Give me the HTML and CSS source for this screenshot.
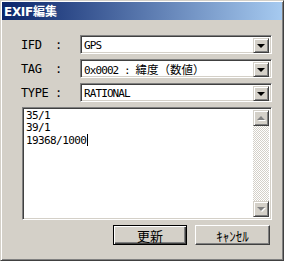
FILE: index.html
```html
<!DOCTYPE html>
<html>
<head>
  <link rel="stylesheet" href="styles.css">
</head>
<body>
  <div class="window">
    <div class="title-bar">EXIF<span class="jp">編集</span></div>

    <div class="dialog-body">
      <div class="field-row">
        <div class="field-label"><span class="field-name">IFD</span><span>:</span></div>
        <div class="combo">
          <span class="combo-text">GPS</span>
          <span class="combo-button"><span class="arrow-down"></span></span>
        </div>
      </div>

      <div class="field-row">
        <div class="field-label"><span class="field-name">TAG</span><span>:</span></div>
        <div class="combo">
          <span class="combo-text">0x0002 : <span class="jp">緯度（数値）</span></span>
          <span class="combo-button"><span class="arrow-down"></span></span>
        </div>
      </div>

      <div class="field-row">
        <div class="field-label"><span class="field-name">TYPE</span><span>:</span></div>
        <div class="combo">
          <span class="combo-text">RATIONAL</span>
          <span class="combo-button"><span class="arrow-down"></span></span>
        </div>
      </div>

      <div class="value-box">
        <div class="value-text">
          <div>35/1</div>
          <div>39/1</div>
          <div>19368/1000<span class="caret"></span></div>
        </div>
        <div class="scrollbar">
          <span class="scroll-button"><span class="arrow-up-gray"></span></span>
          <span class="scroll-track"></span>
          <span class="scroll-button"><span class="arrow-down-gray"></span></span>
        </div>
      </div>

      <div class="button-row">
        <button class="push-button default-button">更新</button>
        <button class="push-button">ｷｬﾝｾﾙ</button>
      </div>
    </div>
  </div>
</body>
</html>
```

FILE: styles.css
```css
/* dialog estilo Windows clásico */
body {
  margin: 0;
  background: #fff;
  font-family: "DejaVu Sans Mono", "Noto Sans CJK JP", monospace;
  font-size: 11px;
  color: #000;
}

.window {
  width: 284px;
  height: 261px;
  box-sizing: border-box;
  background: #d4d0c8;
  border: 1px solid;
  border-color: #d4d0c8 #404040 #404040 #d4d0c8;
  box-shadow: inset 1px 1px #fff, inset -1px -1px #808080;
  padding: 1px 1px;
  display: flex;
  flex-direction: column;
}

.title-bar {
  height: 18px;
  line-height: 18px;
  padding-left: 2px;
  background: linear-gradient(to right, #0a246a, #a6caf0);
  color: #fff;
  font-family: "DejaVu Sans", "Noto Sans CJK JP", sans-serif;
  font-weight: bold;
  font-size: 12px;
  letter-spacing: -0.3px;
}

.jp {
  font-family: "Noto Sans CJK JP", sans-serif;
  letter-spacing: 0;
}

.dialog-body {
  padding: 15px 10px 0 19px;
  display: flex;
  flex-direction: column;
}

.field-row {
  display: flex;
  height: 19px;
  margin-bottom: 5px;
}

.field-label {
  width: 59px;
  flex: none;
  display: flex;
  align-items: center;
  letter-spacing: -0.4px;
  font-size: 12px;
}

.field-name {
  width: 34px;
}

.combo {
  flex: 1;
  display: flex;
  background: #fff;
  border: 1px solid;
  border-color: #808080 #fff #fff #808080;
  box-shadow: inset 1px 1px #404040, inset -1px -1px #d4d0c8;
  padding: 2px;
  box-sizing: border-box;
}

.combo-text {
  flex: 1;
  line-height: 15px;
  padding-left: 1px;
  letter-spacing: -0.9px;
  white-space: nowrap;
}

.combo-text .jp {
  font-size: 11.5px;
}

.combo-button,
.scroll-button {
  width: 16px;
  height: 15px;
  box-sizing: border-box;
  background: #d4d0c8;
  border: 1px solid;
  border-color: #d4d0c8 #404040 #404040 #d4d0c8;
  box-shadow: inset 1px 1px #fff, inset -1px -1px #808080;
  display: flex;
  align-items: center;
  justify-content: center;
  flex: none;
}

.arrow-down {
  width: 0;
  height: 0;
  border-left: 4px solid transparent;
  border-right: 4px solid transparent;
  border-top: 4px solid #000;
}

.arrow-up-gray {
  width: 0;
  height: 0;
  border-left: 4px solid transparent;
  border-right: 4px solid transparent;
  border-bottom: 4px solid #808080;
  filter: drop-shadow(1px 1px 0 #fff);
}

.arrow-down-gray {
  width: 0;
  height: 0;
  border-left: 4px solid transparent;
  border-right: 4px solid transparent;
  border-top: 4px solid #808080;
  filter: drop-shadow(1px 1px 0 #fff);
}

.value-box {
  margin-left: 1px;
  height: 113px;
  box-sizing: border-box;
  display: flex;
  background: #fff;
  border: 1px solid;
  border-color: #808080 #fff #fff #808080;
  box-shadow: inset 1px 1px #404040, inset -1px -1px #d4d0c8;
  padding: 2px;
}

.value-text {
  flex: 1;
  padding: 0 0 0 1px;
  line-height: 12px;
  letter-spacing: -0.6px;
}

.caret {
  display: inline-block;
  width: 1px;
  height: 12px;
  margin-left: 1px;
  vertical-align: -2px;
  background: #000;
}

.scrollbar {
  width: 16px;
  display: flex;
  flex-direction: column;
}

.scroll-button {
  height: 16px;
}

.scroll-track {
  flex: 1;
  background: repeating-conic-gradient(#d4d0c8 0 25%, #fff 0 50%) 0 0 / 2px 2px;
}

.button-row {
  display: flex;
  justify-content: flex-end;
  gap: 8px;
  margin-top: 5px;
  padding-right: 2px;
}

.push-button {
  height: 20px;
  width: 75px;
  padding: 0;
  background: #d4d0c8;
  border: 1px solid;
  border-color: #fff #404040 #404040 #fff;
  box-shadow: inset -1px -1px #808080;
  font-family: "Noto Sans CJK JP", sans-serif;
  font-size: 13px;
  color: #000;
}

.default-button {
  width: 74px;
  border: 1px solid #000;
  box-shadow: inset 1px 1px #fff, inset -1px -1px #404040, inset -2px -2px #808080;
}
```
